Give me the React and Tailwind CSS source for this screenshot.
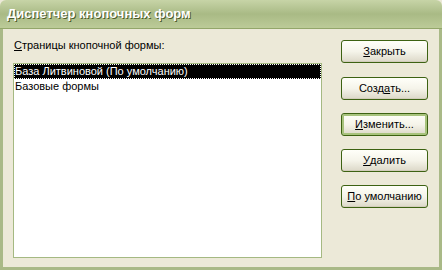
const ui = { fontFamily: '"Liberation Sans", "DejaVu Sans", sans-serif' };

function XpButton({ children, active, className = '' }) {
  return (
    <div
      className={`h-[23px] w-[87px] rounded-[3px] border border-[#3d6212] bg-gradient-to-b from-[#fffff9] via-[#f5f4ea] to-[#dcd8c8] flex items-center justify-center text-[11px] text-black ${
        active ? 'shadow-[inset_0_0_0_2px_#a8c37d]' : 'shadow-[inset_0_-1px_0_#d2cdbb]'
      } ${className}`}
    >
      {children}
    </div>
  );
}

export default function App() {
  return (
    <div className="w-[442px] h-[270px] flex flex-col overflow-hidden bg-[#ece9d8]" style={ui}>
      {/* title bar */}
      <div className="h-[29px] flex items-center pl-[7px] rounded-t-[6px] border-b border-[#93a66a] bg-gradient-to-b from-[#c7d4a7] via-[#a9ba85] to-[#bccb98]">
        <span className="text-[13px] font-bold text-white [text-shadow:1px_1px_0_#4b5a2a]" style={ui}>
          Диспетчер кнопочных форм
        </span>
      </div>

      {/* body */}
      <div className="flex-1 flex border-x-[3px] border-b-[3px] border-[#a9b987]">
        <div className="flex flex-col pl-[10px] pt-[10px]">
          <div className="h-[13px] leading-[13px] text-[11px] text-black pl-[1px]">
            <span className="underline">С</span>траницы кнопочной формы:
          </div>
          <div className="mt-[11px] w-[309px] h-[195px] border border-[#a5b982] bg-white">
            <div className="h-[15px] leading-[15px] bg-black text-white text-[11px] pl-[1px] outline-1 outline-dotted outline-white -outline-offset-1">
              База Литвиновой (По умолчанию)
            </div>
            <div className="h-[14px] leading-[14px] text-black text-[11px] pl-[1px]">Базовые формы</div>
          </div>
        </div>

        <div className="flex flex-col gap-[13px] pl-[19px] pt-[11px]">
          <XpButton>
            <span className="underline">З</span>акрыть
          </XpButton>
          <XpButton className="mt-[1px]">
            Созд<span className="underline">а</span>ть...
          </XpButton>
          <XpButton active>
            <span className="underline">И</span>зменить...
          </XpButton>
          <XpButton>
            <span className="underline">У</span>далить
          </XpButton>
          <XpButton>
            <span className="underline">П</span>о умолчанию
          </XpButton>
        </div>
      </div>
    </div>
  );
}
